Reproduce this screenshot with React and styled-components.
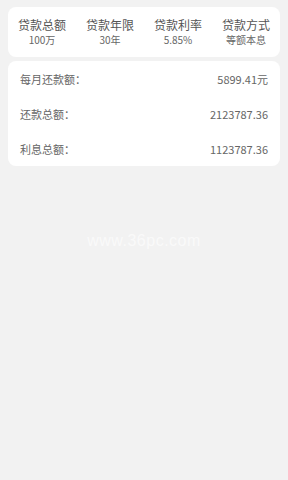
import React from "react";
import styled, { createGlobalStyle } from "styled-components";

const Global = createGlobalStyle`
  html, body { margin: 0; padding: 0; background: #f2f2f2; }
  body { font-family: "Noto Sans CJK SC", "Noto Sans", sans-serif; }
`;

const Page = styled.div`
  width: 288px;
  height: 480px;
  background: #f2f2f2;
  padding: 7px 8px 0;
  box-sizing: border-box;
  display: flex;
  flex-direction: column;
  gap: 4px;
`;

const Card = styled.div`
  background: #fff;
  border-radius: 8px;
`;

const Summary = styled(Card)`
  height: 50px;
  display: grid;
  grid-template-columns: repeat(4, 1fr);
  align-items: center;
`;

const Col = styled.div`
  display: flex;
  flex-direction: column;
  align-items: center;
  line-height: 1;
`;

const Label = styled.div`
  font-size: 12px;
  color: #555;
`;

const Value = styled.div`
  font-size: 10px;
  color: #666;
  margin-top: 4px;
`;

const Detail = styled(Card)`
  padding: 0 12px;
  display: flex;
  flex-direction: column;
`;

const Row = styled.div`
  height: 35px;
  display: flex;
  align-items: center;
  justify-content: space-between;
  font-size: 11px;
  color: #666;
`;

const Watermark = styled.div`
  margin-top: 62px;
  text-align: center;
  font-family: "Liberation Sans", sans-serif;
  font-size: 16px;
  color: rgba(255, 255, 255, 0.6);
  letter-spacing: 0.5px;
`;

const summary = [
  ["贷款总额", "100万"],
  ["贷款年限", "30年"],
  ["贷款利率", "5.85%"],
  ["贷款方式", "等额本息"],
];

const rows = [
  ["每月还款额：", "5899.41元"],
  ["还款总额：", "2123787.36"],
  ["利息总额：", "1123787.36"],
];

export default function App() {
  return (
    <>
      <Global />
      <Page>
        <Summary>
          {summary.map(([l, v]) => (
            <Col key={l}>
              <Label>{l}</Label>
              <Value>{v}</Value>
            </Col>
          ))}
        </Summary>
        <Detail>
          {rows.map(([l, v]) => (
            <Row key={l}>
              <span>{l}</span>
              <span>{v}</span>
            </Row>
          ))}
        </Detail>
        <Watermark>www.36pc.com</Watermark>
      </Page>
    </>
  );
}
